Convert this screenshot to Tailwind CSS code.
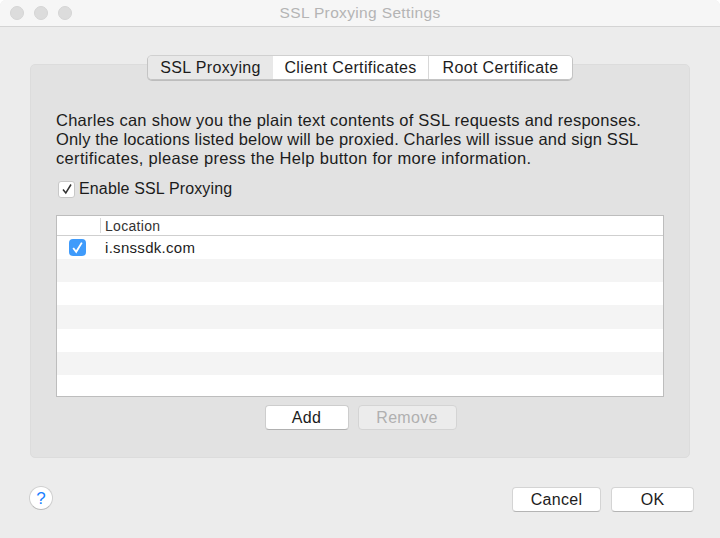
<!DOCTYPE html>
<html lang="en">
<head>
    <meta charset="UTF-8">
    <title>SSL Proxying Settings</title>
    <script src="https://cdn.jsdelivr.net/npm/@tailwindcss/browser@4"></script>
</head>
<body class="bg-white">
    <div class="w-[720px] h-[538px] overflow-hidden flex flex-col bg-[#ececec] rounded-t-[6px] font-['Liberation_Sans',sans-serif] text-[#1c1c1c]">

        <!-- Title bar -->
        <div class="relative h-[27px] shrink-0 flex items-center justify-center bg-[#f6f6f6] border-b border-[#d4d4d4]">
            <div class="absolute left-[10px] top-[6px] flex gap-[10px]">
                <span class="w-[14px] h-[14px] rounded-full bg-[#dcdcdc] border border-[#d4d4d4]"></span>
                <span class="w-[14px] h-[14px] rounded-full bg-[#dcdcdc] border border-[#d4d4d4]"></span>
                <span class="w-[14px] h-[14px] rounded-full bg-[#dcdcdc] border border-[#d4d4d4]"></span>
            </div>
            <span class="text-[15.5px] tracking-[0.35px] text-[#b4b4b4]">SSL Proxying Settings</span>
        </div>

        <!-- Tabs -->
        <div class="relative z-10 flex justify-center mt-[28px] -mb-[16px] h-[25px]">
            <div class="flex h-[25px] rounded-[5px] overflow-hidden border border-[#c4c4c4] border-t-[#d0d0d0] shadow-[0_1px_0_#bdbdbd] text-[16px] tracking-[0.36px]">
                <div class="w-[125px] flex items-center justify-center bg-[#e8e8e8]">SSL Proxying</div>
                <div class="w-[156px] flex items-center justify-center bg-white border-r border-[#d8d8d8]">Client Certificates</div>
                <div class="w-[143px] flex items-center justify-center bg-white">Root Certificate</div>
            </div>
        </div>

        <!-- Panel -->
        <div class="mx-[30px] h-[394px] shrink-0 bg-[#e2e2e2] border border-[#dcdcdc] rounded-[5px] px-[25px] pt-[46px]">
            <div class="text-[16.5px] leading-[19px] whitespace-nowrap">
                <p class="tracking-[0.25px]">Charles can show you the plain text contents of SSL requests and responses.</p>
                <p class="tracking-[0.15px]">Only the locations listed below will be proxied. Charles will issue and sign SSL</p>
                <p class="tracking-[0.32px]">certificates, please press the Help button for more information.</p>
            </div>

            <div class="flex items-center gap-[4px] mt-[11px] h-[20px] ml-[2px]">
                <span class="w-[17px] h-[17px] flex items-center justify-center bg-white rounded-[3px] border border-[#c8c8c8]">
                    <svg class="w-[12px] h-[12px]" viewBox="0 0 12 12" fill="none" stroke="#333" stroke-width="1.5"><path d="M2 6.5L4.8 10L10 1.5"/></svg>
                </span>
                <span class="text-[16px] tracking-[0.14px]">Enable SSL Proxying</span>
            </div>

            <!-- Table -->
            <div class="mt-[16px] w-[608px] border border-[#bdbdbd] bg-white">
                <div class="flex h-[20px] border-b border-[#cfcfcf] text-[14px] tracking-[0.3px] text-[#333]">
                    <div class="w-[44px] my-[2px] border-r border-[#d8d8d8]"></div>
                    <div class="pl-[4px] leading-[20px]">Location</div>
                </div>
                <div class="flex items-center h-[23px] text-[15px] tracking-[0.3px]">
                    <div class="w-[44px] flex justify-center">
                        <span class="w-[17px] h-[17px] ml-[-3px] flex items-center justify-center rounded-[4px] bg-[#3f9bfb]">
                            <svg class="w-[13px] h-[13px]" viewBox="0 0 12 12" fill="none" stroke="#fff" stroke-width="1.7"><path d="M2 6.5L4.8 10L10 1.5"/></svg>
                        </span>
                    </div>
                    <div class="pl-[4px] pt-[2px]">i.snssdk.com</div>
                </div>
                <div class="h-[23px] bg-[#f4f4f4]"></div>
                <div class="h-[23px] bg-white"></div>
                <div class="h-[24px] bg-[#f4f4f4]"></div>
                <div class="h-[23px] bg-white"></div>
                <div class="h-[23px] bg-[#f4f4f4]"></div>
                <div class="h-[21px] bg-white"></div>
            </div>

            <div class="flex justify-center gap-[9px] mt-[8px] ml-[1px]">
                <button class="w-[84px] h-[25px] bg-white rounded-[4px] border border-[#cdcdcd] border-b-[#b0b0b0] text-[16px] tracking-[0.3px]">Add</button>
                <button class="w-[99px] h-[25px] bg-[#ececec] rounded-[4px] border border-[#d4d4d4] text-[16px] tracking-[0.3px] text-[#b0b0b0]">Remove</button>
            </div>
        </div>

        <!-- Footer -->
        <div class="flex items-start justify-between ml-[29px] mr-[26px] mt-[28px]">
            <button class="w-[24px] h-[24px] rounded-full bg-white border border-[#cfcfcf] border-b-[#b8b8b8] text-[#1a7fff] text-[17px] leading-none pt-[1px]">?</button>
            <div class="flex gap-[10px] mt-[1px]">
                <button class="w-[89px] h-[25px] bg-white rounded-[4px] border border-[#d4d4d4] border-b-[#b4b4b4] text-[16px] tracking-[0.3px]">Cancel</button>
                <button class="w-[83px] h-[25px] bg-white rounded-[4px] border border-[#d4d4d4] border-b-[#b4b4b4] text-[16px] tracking-[0.3px]">OK</button>
            </div>
        </div>
    </div>
</body>
</html>
